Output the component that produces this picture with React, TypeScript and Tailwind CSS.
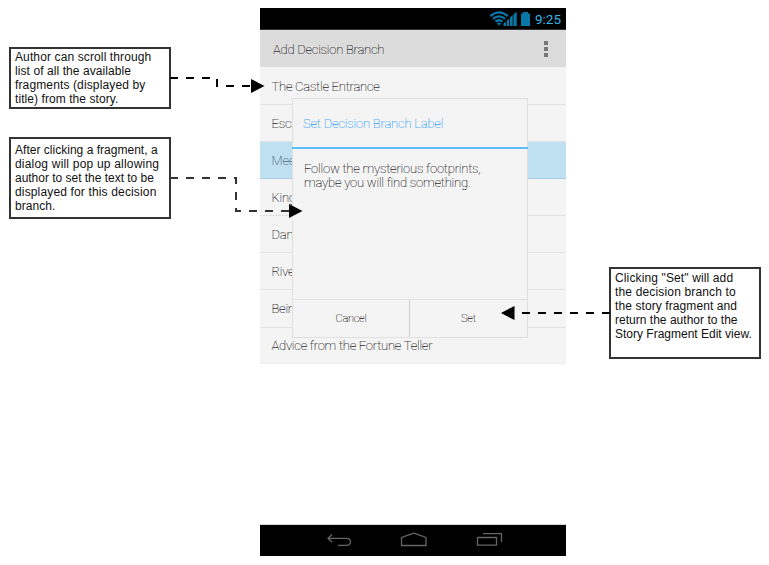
import type { ReactNode } from "react";

const rows = [
  { title: "The Castle Entrance", height: "h-[38px]" },
  { title: "Esca", height: "h-[37px]" },
  { title: "Mee", height: "h-[37px]", selected: true },
  { title: "King", height: "h-[37px]" },
  { title: "Dan", height: "h-[37px]" },
  { title: "Rive", height: "h-[37px]" },
  { title: "Bein", height: "h-[38px]" },
  { title: "Advice from the Fortune Teller", height: "h-[36px]" },
];

type Line = { text: string; tracking: string };

function Note({ lines, className }: { lines: Line[]; className: string }) {
  return (
    <div
      className={`border-2 border-[#333] bg-white pl-1 font-['Liberation_Sans',Arial,sans-serif] text-[12px] leading-[14px] whitespace-nowrap text-[#111] ${className}`}
    >
      {lines.map((line) => (
        <div key={line.text} className={line.tracking}>
          {line.text}
        </div>
      ))}
    </div>
  );
}

function StatusBar() {
  return (
    <div className="flex h-[22px] items-start justify-end border-b border-[#333] bg-black pr-[5px]">
      <svg width="42" height="21" viewBox="490 8 42 21" className="mr-[3px]">
        <g fill="none" stroke="#0878a8" strokeWidth="2.3">
          <path d="M490.3 16Q499 8.800 507.700 16" />
          <path d="M493 18.900Q499 13.800 505 18.900" />
          <path d="M495.500 21.700Q499 18.700 502.500 21.700" />
        </g>
        <path d="M496.800 23.200Q499 21.800 501.200 23.200L499 25.500Z" fill="#0878a8" />
        <path d="M503.500 26V23.500L506 21.500V26ZM506.800 26V20.500L509.200 18.500V26ZM510 26V17.500L512.700 15V26ZM513.500 26V14.500L516.700 11.500V26Z" fill="#0878a8" />
        <path d="M521 13.500H523V12H528V13.500H530V26H521Z" fill="#0878a8" />
      </svg>
      <span className="w-[26px] text-[13.5px] leading-[23px] font-normal whitespace-nowrap text-[#33b5e5]">9:25</span>
    </div>
  );
}

function TitleBar() {
  return (
    <div className="flex h-[38px] items-center justify-between border-b border-[#cfcfcf] bg-[#dcdcdc] pr-[18px] pl-[13px]">
      <span className="pt-[2px] text-[13px] leading-4 tracking-[-0.23px] whitespace-nowrap text-[#2a2a2a] [-webkit-text-stroke:0.12px]">
        Add Decision Branch
      </span>
      <span className="flex flex-col gap-[2px]">
        <i className="size-1 bg-[#777]" />
        <i className="size-1 bg-[#777]" />
        <i className="size-1 bg-[#777]" />
      </span>
    </div>
  );
}

function FragmentList() {
  return (
    <div className="bg-[#f4f4f4]">
      {rows.map((row) => (
        <div
          key={row.title}
          className={`flex items-center border-b pt-px pl-[11.5px] text-[13px] leading-4 tracking-[-0.24px] whitespace-nowrap [-webkit-text-stroke:0.12px] first:pt-[2px] last:border-[#eee] ${row.height} ${
            row.selected ? "border-[#abcfe2] bg-[#bfe0f1] text-[#44687a]" : "border-[#e2e2e2] text-[#2a2a2a]"
          }`}
        >
          {row.title}
        </div>
      ))}
    </div>
  );
}

function DialogButton({ children, className }: { children: ReactNode; className: string }) {
  return (
    <button
      className={`flex h-full items-center justify-center text-[11px] leading-4 tracking-[-0.25px] text-[#111] [-webkit-text-stroke:0.1px] ${className}`}
    >
      {children}
    </button>
  );
}

function LabelDialog() {
  return (
    <div className="absolute top-[90px] left-8 flex h-[240px] w-[236px] flex-col border border-[#e0e0e0] bg-[#f4f4f4]">
      <div className="-mx-px flex h-[50px] items-center border-b-2 border-[#5bbef5] pt-px pl-[11px] text-[13px] tracking-[-0.19px] whitespace-nowrap text-[#2a9dfa] [-webkit-text-stroke:0.1px]">
        Set Decision Branch Label
      </div>
      <div className="flex-1 pt-[13px] pl-[11px] text-[13px] leading-[14px] tracking-[-0.21px] whitespace-nowrap text-[#2a2a2a] [-webkit-text-stroke:0.12px]">
        <div>Follow the mysterious footprints,</div>
        <div>maybe you will find something.</div>
      </div>
      <div className="flex h-[38px] border-t border-[#e0e0e0]">
        <DialogButton className="w-[117px] border-r border-[#d0d0d0]">Cancel</DialogButton>
        <DialogButton className="flex-1">Set</DialogButton>
      </div>
    </div>
  );
}

function NavigationBar() {
  return (
    <div className="h-8 border-t border-[#d5d5d5] bg-black">
      <svg width="306" height="31" viewBox="260 525 306 31" fill="none" stroke="#656565" strokeWidth="1.3">
        <path d="M332 534.500L328 538.300L332 542.200M328.500 538.300H346C352 538.300 352 545.300 346 545.300H338" />
        <path d="M401.500 545.500V537.500L414 533.200L426 537.500V545.500Z" />
        <path d="M477.500 537.500H496.500V545.200H477.500ZM483 533.700H501.500V542" />
      </svg>
    </div>
  );
}

function Connectors() {
  return (
    <svg className="pointer-events-none absolute inset-0" width="769" height="565" viewBox="0 0 769 565">
      <g fill="none" strokeWidth="2" strokeDasharray="8 8">
        <path d="M170 78H217V86H254" stroke="#000" />
        <path d="M170 178H236V211H292" stroke="#333" />
        <path d="M610 313H514" stroke="#000" />
      </g>
      <path d="M251 79V93L264.500 86ZM289 204V218L302.500 211ZM514.500 306V320L501 313Z" fill="#000" />
    </svg>
  );
}

export default function App() {
  return (
    <main className="relative flex h-[565px] w-[769px] overflow-hidden bg-white">
      <aside className="flex w-[260px] flex-col gap-7 pt-[47px] pl-[9px]">
        <Note
          className="h-[62px] w-[162px] pt-px"
          lines={[
            { text: "Author can scroll through", tracking: "tracking-[0.12px]" },
            { text: "list of all the available", tracking: "tracking-[0.08px]" },
            { text: "fragments (displayed by", tracking: "tracking-[0.13px]" },
            { text: "title) from the story.", tracking: "tracking-[0.07px]" },
          ]}
        />
        <Note
          className="h-[82px] w-[162px] pt-1"
          lines={[
            { text: "After clicking a fragment, a", tracking: "tracking-[0.02px]" },
            { text: "dialog will pop up allowing", tracking: "tracking-[0.2px]" },
            { text: "author to set the text to be", tracking: "tracking-[-0.02px]" },
            { text: "displayed for this decision", tracking: "tracking-[0.15px]" },
            { text: "branch.", tracking: "tracking-[0.05px]" },
          ]}
        />
      </aside>
      <section className="relative mt-2 flex h-[548px] w-[306px] flex-col justify-between font-[Roboto,sans-serif] font-thin">
        <div>
          <StatusBar />
          <TitleBar />
          <div className="-mt-px">
            <FragmentList />
          </div>
        </div>
        <NavigationBar />
        <LabelDialog />
      </section>
      <aside className="pt-[267px] pl-[43px]">
        <Note
          className="h-[92px] w-[152px] pt-[2px]"
          lines={[
            { text: 'Clicking "Set" will add', tracking: "tracking-[0.13px]" },
            { text: "the decision branch to", tracking: "tracking-[0.16px]" },
            { text: "the story fragment and", tracking: "tracking-[0.09px]" },
            { text: "return the author to the", tracking: "tracking-[0.02px]" },
            { text: "Story Fragment Edit view.", tracking: "tracking-[0px]" },
          ]}
        />
      </aside>
      <Connectors />
    </main>
  );
}
